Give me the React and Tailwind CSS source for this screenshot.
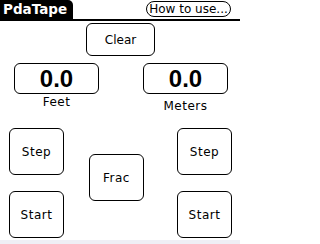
const btn =
  "h-[47px] w-[55px] rounded-[6px] border-[1.5px] border-black text-[12px] tracking-[0.5px]";

export default function App() {
  const font = { fontFamily: '"DejaVu Sans", "Liberation Sans", sans-serif' };
  const num = { fontFamily: '"Liberation Sans", Arial, sans-serif' };

  return (
    <div className="flex h-[244px] w-[240px] flex-col bg-white text-black" style={font}>
      <div className="flex h-[21px] items-start border-b-2 border-black">
        <div className="flex h-[19px] w-[73px] items-center rounded-tr-[5px] bg-black pl-[3px] text-[13.5px] font-bold text-white">
          PdaTape
        </div>
        <button className="ml-[73px] mt-px flex h-[16px] w-[85px] items-center justify-center rounded-full border-[1.5px] border-black text-[12px] leading-none">
          How to use...
        </button>
      </div>

      <div className="flex flex-1 flex-col">
        <button className="ml-[86px] mt-[2px] h-[33px] w-[69px] rounded-[6px] border-[1.5px] border-black text-[12px]">
          Clear
        </button>

        <div className="mt-[7px] flex">
          <div className="ml-[14px] flex w-[85px] flex-col items-center">
            <div
              className="flex h-[31px] w-full items-center justify-center rounded-[6px] border-[1.5px] border-black text-[24px] font-bold leading-none"
              style={num}
            >
              0.0
            </div>
            <span className="mt-[2px] text-[12px] leading-[13px] tracking-[0.5px]">Feet</span>
          </div>
          <div className="ml-[44px] flex w-[85px] flex-col items-center">
            <div
              className="flex h-[31px] w-full items-center justify-center rounded-[6px] border-[1.5px] border-black text-[24px] font-bold leading-none"
              style={num}
            >
              0.0
            </div>
            <span className="mt-[6px] text-[12px] leading-[13px] tracking-[0.5px]">Meters</span>
          </div>
        </div>

        <div className="mt-[15px] flex">
          <div className="ml-[9px] flex flex-col gap-[16px]">
            <button className={btn}>Step</button>
            <button className={btn}>Start</button>
          </div>
          <div className="ml-[25px] mt-[26px]">
            <button className={btn}>Frac</button>
          </div>
          <div className="ml-[33px] flex flex-col gap-[16px]">
            <button className={btn}>Step</button>
            <button className={btn}>Start</button>
          </div>
        </div>
      </div>

      <div className="h-[4px] bg-[#efeef5]" />
    </div>
  );
}
